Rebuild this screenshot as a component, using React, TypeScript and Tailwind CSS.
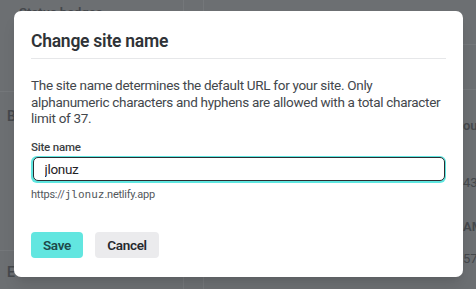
import React, { useState } from 'react';

const font = { fontFamily: 'Roboto, "Noto Sans", sans-serif' };

const App = () => {
  const [name, setName] = useState('jlonuz');

  return (
    <div className="relative w-[476px] h-[289px] overflow-hidden bg-[#6c6f72] text-[#45484c]" style={font}>
      {/* page behind the overlay */}
      <div className="flex h-full">
        <div className="w-[184px] shrink-0 flex flex-col border-r border-[#74777a]">
          <div className="h-[92px] border-b border-[#74777a] pl-[19px] pt-[3px] text-[13px] font-semibold">Status badges</div>
          <div className="h-[159px] border-b border-[#74777a] pl-[7px] pt-[14px] text-[14px] font-semibold">B</div>
          <div className="pl-[7px] pt-[11px] text-[14px] font-semibold">E</div>
        </div>
        <div className="w-[20px] shrink-0 border-r border-[#74777a]" />
        <div className="flex-1 flex flex-col">
          <div className="h-[45px] w-full border-b border-[#74777a]" />
          <div className="h-[45px] w-full border-b border-[#74777a]" />
          <div className="w-full flex flex-col items-start pl-[259px] text-[13px] leading-[16px] font-semibold whitespace-nowrap">
            <span className="mt-[28px]">ou</span>
            <span className="mt-[41px] font-normal">43</span>
            <span className="mt-[28px]">AM</span>
            <span className="mt-[16px] font-normal">57</span>
          </div>
        </div>
      </div>

      {/* modal */}
      <div className="absolute left-[14px] top-[11px] w-[449px] h-[266px] bg-white rounded-[7px] shadow-lg px-[17px] pt-[18px] flex flex-col">
        <h2 className="text-[17.5px] leading-[24px] font-semibold tracking-[-0.25px] text-[#2f3337]">Change site name</h2>
        <div className="mt-[5px] h-px bg-[#e6e7e9]" />
        <p className="mt-[18px] text-[13.5px] leading-[16.6px] tracking-[-0.3px] text-[#43474c] whitespace-nowrap">
          The site name determines the default URL for your site. Only
          <br />
          alphanumeric characters and hyphens are allowed with a total character
          <br />
          limit of 37.
        </p>
        <label className="mt-[12px] text-[11.5px] leading-[16px] font-medium tracking-[-0.2px] text-[#3b3f44]">Site name</label>
        <div className="mt-[1px] rounded-[6px] bg-[#5fe6e0] p-[1.5px]">
          <input
            value={name}
            onChange={(e) => setName(e.target.value)}
            className="block w-full h-[24px] rounded-[5px] border border-[#2b2e32] bg-white pl-[11px] text-[13.5px] tracking-[-0.3px] text-[#1f2226] outline-none"
            style={font}
          />
        </div>
        <div className="mt-[4px] text-[11px] leading-[16px] tracking-[-0.25px] text-[#53575c]">
          https://<span className="tracking-normal" style={{ fontFamily: '"DejaVu Sans Mono", monospace', fontSize: '11px' }}>{name}</span>.netlify.app
        </div>
        <div className="mt-[29px] flex gap-[12px]">
          <button className="h-[26px] w-[52px] rounded-[4px] bg-[#62e6e0] text-[13.5px] font-semibold tracking-[-0.3px] text-[#1e4a4a]">Save</button>
          <button className="h-[26px] w-[64px] rounded-[4px] bg-[#ebebed] text-[13.5px] font-semibold tracking-[-0.3px] text-[#26292d]">Cancel</button>
        </div>
      </div>
    </div>
  );
};

export default App;
